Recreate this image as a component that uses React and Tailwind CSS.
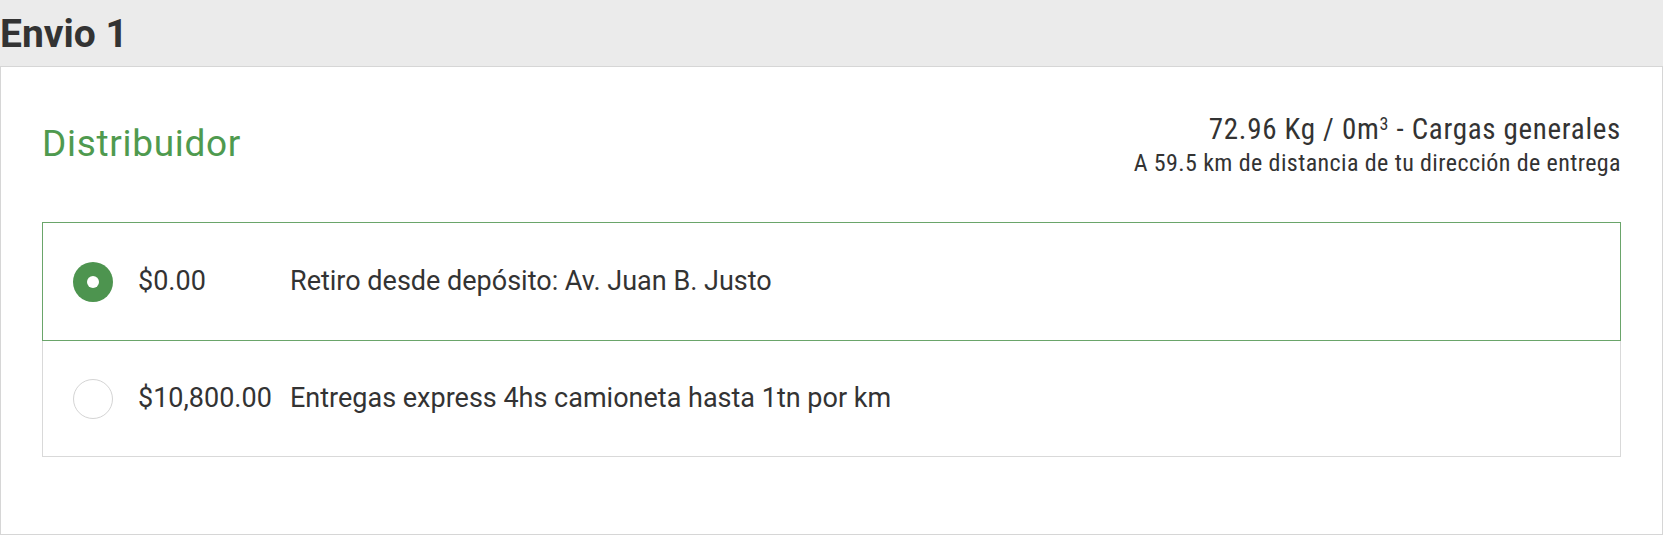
import React, { useState } from "react";

const options = [
  { price: "$0.00", label: "Retiro desde depósito: Av. Juan B. Justo" },
  { price: "$10,800.00", label: "Entregas express 4hs camioneta hasta 1tn por km" },
];

const Radio = ({ checked }) =>
  checked ? (
    <span className="flex h-[40px] w-[40px] shrink-0 items-center justify-center rounded-full bg-[#4d944f]">
      <span className="h-[12px] w-[12px] rounded-full bg-white" />
    </span>
  ) : (
    <span className="h-[40px] w-[40px] shrink-0 rounded-full border border-[#d4d4d4] bg-white" />
  );

export default function App() {
  const [selected, setSelected] = useState(0);

  return (
    <div className="min-h-screen w-full bg-white text-[#333] font-['Roboto',sans-serif]">
      <header className="flex h-[66px] items-center bg-[#ebebeb]">
        <h1 className="text-[39px] font-bold leading-none text-[#333] pt-[2px]">Envio 1</h1>
      </header>

      <section className="border border-t border-[#d6d6d6] px-[41px] pt-[45px] pb-[77px]">
        <div className="flex items-start justify-between">
          <h2 className="mt-[12px] text-[37px] leading-[40px] tracking-[0.7px] text-[#4f9a4f]">Distribuidor</h2>
          <div className="text-right font-['Roboto_Condensed','Roboto',sans-serif]">
            <p className="text-[29px] leading-[34px] tracking-[0.7px] text-[#333]">
              72.96 Kg / 0m<sup className="text-[18px]">3</sup> - Cargas generales
            </p>
            <p className="text-[24px] leading-[35px] tracking-[0.4px] text-[#333]">
              A 59.5 km de distancia de tu dirección de entrega
            </p>
          </div>
        </div>

        <div className="mt-[41px]">
          {options.map((opt, i) => (
            <button
              key={i}
              onClick={() => setSelected(i)}
              className={`flex w-full items-center text-left ${
                i === 0 ? "h-[119px]" : "h-[116px]"
              } ${
                selected === i
                  ? "border border-[#6aa56a]"
                  : i === 0
                  ? "border border-[#d9d9d9]"
                  : "border border-t-0 border-[#d9d9d9]"
              } pl-[30px]`}
            >
              <Radio checked={selected === i} />
              <span className="ml-[25px] w-[152px] text-[27px] text-[#333]">{opt.price}</span>
              <span className="text-[27px] text-[#333]">{opt.label}</span>
            </button>
          ))}
        </div>
      </section>
    </div>
  );
}
